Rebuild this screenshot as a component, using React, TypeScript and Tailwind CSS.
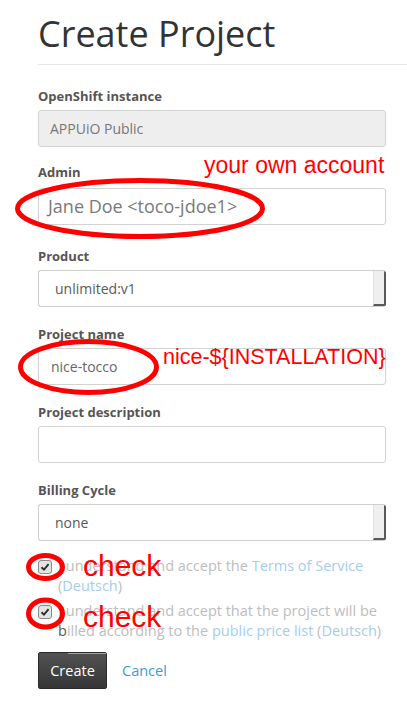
import React from "react";

function Label({ children, className = "" }: { children: React.ReactNode; className?: string }) {
  return <div className={`text-[13px] leading-[18px] font-bold text-[#555] ${className}`}>{children}</div>;
}

function Select({ value }: { value: string }) {
  return (
    <div className="flex h-[37px] overflow-hidden rounded-[3px] border border-r-0 border-[#cfcfcf] bg-white">
      <div className="flex flex-1 items-center pl-[16px] text-[14px] text-[#5a5a5a]">{value}</div>
      <div className="h-full w-[13px] border-b-2 border-r-2 border-l border-l-[#e2e2e2] border-b-[#5a5a5a] border-r-[#5a5a5a] bg-[#efefef]" />
    </div>
  );
}

function Check() {
  return (
    <div className="mt-[4px] flex h-[14px] w-[14px] shrink-0 items-center justify-center rounded-[3px] border border-[#8a8a8a] bg-[#e4e4e4]">
      <svg width="10" height="10" viewBox="0 0 10 10">
        <path d="M1.5 5.2 L4 7.6 L8.6 2.2" fill="none" stroke="#2d2d2d" strokeWidth="1.9" />
      </svg>
    </div>
  );
}

export default function App() {
  return (
    <div className="relative min-h-[708px] bg-white font-['Open_Sans',sans-serif]">
      <div className="pl-[38px]">
        <h1 className="pt-[14px] text-[36px] leading-[40px] font-normal text-[#333]">Create Project</h1>
        <div className="mt-[10px] h-px bg-[#e7e7e7]" />
        <div className="w-[348px] pt-[22px]">
          <div className="mb-[16px]">
            <Label className="mb-[5px]">OpenShift instance</Label>
            <div className="flex h-[37px] items-center rounded-[3px] border border-[#d2d2d2] bg-[#eeeeee] pl-[11px] text-[14px] text-[#777]">
              APPUiO Public
            </div>
          </div>
          <div className="mb-[22px]">
            <Label className="mb-[7px]">Admin</Label>
            <div className="flex h-[37px] items-center rounded-[3px] border border-[#d2d2d2] bg-white pl-[9px] text-[18px] text-[#7a7a7a]">
              Jane Doe &lt;toco-jdoe1&gt;
            </div>
          </div>
          <div className="mb-[18px]">
            <Label className="mb-[5px]">Product</Label>
            <Select value="unlimited:v1" />
          </div>
          <div className="mb-[18px]">
            <Label className="mb-[5px]">Project name</Label>
            <div className="flex h-[37px] items-center rounded-[3px] border border-[#d2d2d2] bg-white pl-[12px] text-[14px] text-[#666]">
              nice-tocco
            </div>
          </div>
          <div className="mb-[18px]">
            <Label className="mb-[5px]">Project description</Label>
            <div className="h-[37px] rounded-[3px] border border-[#d2d2d2] bg-white" />
          </div>
          <div>
            <Label className="mb-[5px]">Billing Cycle</Label>
            <Select value="none" />
          </div>

          <div className="mt-[15px] flex gap-[6px] text-[14.5px] leading-[20px] text-[#bdbdbd]">
            <Check />
            <div>
              I understand and accept the <span className="text-[#a3cdf0]">Terms of Service</span> (
              <span className="text-[#a3cdf0]">Deutsch</span>)
            </div>
          </div>
          <div className="mt-[5px] flex gap-[6px] text-[14.5px] leading-[20px] text-[#bdbdbd]">
            <Check />
            <div>
              I understand and accept that the project will be <span className="text-[#5a5a5a]">b</span>illed according
              to the <span className="text-[#a3cdf0]">public price list</span> (<span className="text-[#a3cdf0]">Deutsch</span>)
            </div>
          </div>

          <div className="mt-[11px] flex items-center">
            <button className="relative flex h-[37px] w-[69px] items-center justify-center rounded-[2px] border border-[#2b2b2b] bg-gradient-to-b from-[#525252] to-[#363636] text-[14.5px] text-white">
              <span className="absolute left-[29px] right-0 top-0 h-px bg-[#a0a0a0]" />
              Create
            </button>
            <a className="ml-[15px] text-[14.5px] text-[#3a9be0]">Cancel</a>
          </div>
        </div>
      </div>

      <svg className="pointer-events-none absolute left-0 top-0" width="407" height="708">
        <g fill="none" stroke="#ff0000" strokeWidth="5">
          <ellipse cx="140" cy="208.5" rx="122.5" ry="28" />
          <ellipse cx="88.5" cy="367" rx="68" ry="25.5" />
          <ellipse cx="45.5" cy="567" rx="17" ry="11.5" />
          <ellipse cx="45.5" cy="613.5" rx="17" ry="13.5" />
        </g>
      </svg>

      <div className="absolute left-[204px] top-[154px] font-['Liberation_Sans',sans-serif] text-[23px] leading-none whitespace-nowrap text-[#ff0000]">
        your own account
      </div>
      <div className="absolute left-[163px] top-[347px] font-['Liberation_Sans',sans-serif] text-[21.5px] leading-none whitespace-nowrap text-[#ff0000]">
        nice-$&#123;INSTALLATION&#125;
      </div>
      <div className="absolute left-[83px] top-[551px] font-['Liberation_Sans',sans-serif] text-[30px] leading-none text-[#ff0000]">
        check
      </div>
      <div className="absolute left-[83px] top-[602px] font-['Liberation_Sans',sans-serif] text-[30px] leading-none text-[#ff0000]">
        check
      </div>
    </div>
  );
}
